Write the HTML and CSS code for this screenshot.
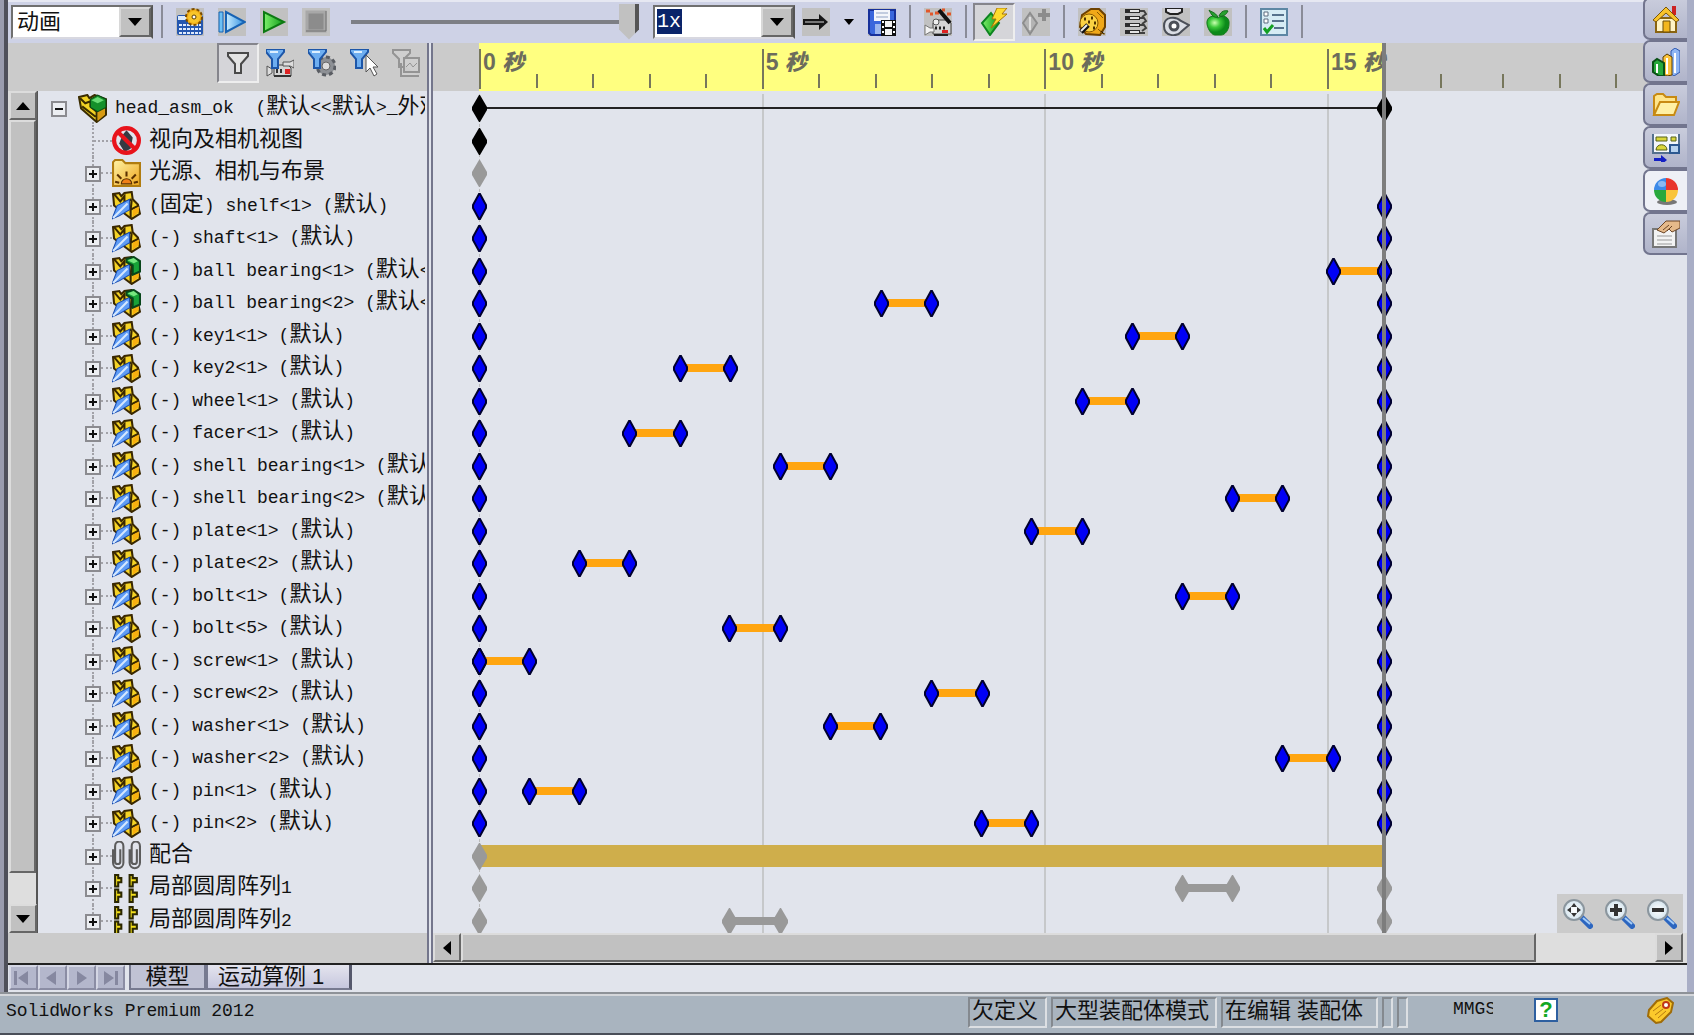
FILE: index.html
```html
<!DOCTYPE html>
<html lang="zh-CN">
<head>
<meta charset="utf-8">
<title>SolidWorks Premium 2012</title>
<link rel="stylesheet" href="styles.css">
</head>
<body>
<svg class="sprite" aria-hidden="true">
  <defs>
    <linearGradient id="gBlue" x1="0" x2="1"><stop offset="0" stop-color="#c8ecff"/><stop offset="1" stop-color="#2f8fe0"/></linearGradient>
    <linearGradient id="gGreen" x1="0" x2="1"><stop offset="0" stop-color="#7cf06a"/><stop offset="1" stop-color="#0f9a18"/></linearGradient>
    <linearGradient id="gGold" x1="0" x2="1" y2="1"><stop offset="0" stop-color="#fff4a8"/><stop offset="1" stop-color="#eea51c"/></linearGradient>
    <radialGradient id="gApple" cx=".35" cy=".35"><stop offset="0" stop-color="#c9ffb0"/><stop offset=".5" stop-color="#3cc83a"/><stop offset="1" stop-color="#0b8a1a"/></radialGradient>
    <radialGradient id="gLens"><stop offset="0" stop-color="#fff"/><stop offset="1" stop-color="#d4e4ee"/></radialGradient>
  </defs>
  <symbol id="calc" viewBox="0 0 28 28"><rect x="1" y="7" width="26" height="20" rx="2" fill="#2456b0"/><rect x="2" y="8" width="12" height="4" fill="#dbe9fa"/><path d="M3 17h22M3 21h22M3 25h22" stroke="#dfeafc" stroke-width="2" stroke-dasharray="3 1"/><circle cx="18" cy="9" r="8" fill="#f2ad14" stroke="#7a4c00" stroke-width="2" stroke-dasharray="3 2"/><circle cx="18" cy="9" r="6" fill="#f8c42a"/><circle cx="18" cy="9" r="2" fill="#fff" stroke="#5a3c00"/></symbol>
  <symbol id="playstart" viewBox="0 0 28 28"><path d="M1 4h4v20H1z" fill="#6cc0f4" stroke="#1763b4"/><path d="M8 4v20l19-10z" fill="url(#gBlue)" stroke="#1763b4" stroke-width="2"/></symbol>
  <symbol id="play" viewBox="0 0 28 28"><path d="M4 4v20l20-10z" fill="url(#gGreen)" stroke="#0c7a12" stroke-width="2"/></symbol>
  <symbol id="stop" viewBox="0 0 28 28"><path d="M5 4h18v19H5z" fill="#8c8c8c" stroke="#a8a8a8" stroke-width="3"/><path d="M4 23h20V3" fill="none" stroke="#707070"/></symbol>
  <symbol id="arrow" viewBox="0 0 28 28"><path d="M1 11h16V6l9 8-9 8v-5H1z" fill="#161616"/><path d="M3 14h19" stroke="#777" stroke-width="2"/></symbol>
  <symbol id="save" viewBox="0 0 28 28"><path d="M1 2h26v25H3l-2-2z" fill="#3a67dc" stroke="#17309a" stroke-width="2"/><path d="M6 2h16v11H6z" fill="#f3f6fb"/><path d="M8 5h12M8 9h12" stroke="#8fa2c4"/><path d="M7 16h9v10H7z" fill="#9db7ee"/><path d="M13 12h15v16H13z" fill="#111"/><path d="M17 13h7v6h-7zM17 21h7v6h-7z" fill="#f4f4f4"/><path d="M15 13v15M26 13v15" stroke="#fff" stroke-width="2" stroke-dasharray="2 3"/></symbol>
  <symbol id="wizard" viewBox="0 0 28 28"><path d="M2 3h4M11 5h4M18 2h3M23 6h4M6 6h3" stroke="#e2572a" stroke-width="3"/><path d="M9 15l3-3h11l4 3v11H9z" fill="#d6d6d6" stroke="#444"/><path d="M1 17l5 3h4v4H6l-5 3z" fill="#f3f3f3" stroke="#777"/><path d="M15 2l11 13" stroke="#111" stroke-width="4"/><circle cx="12" cy="14" r="3" fill="#eee" stroke="#555"/><path d="M11 20h12" stroke="#222" stroke-width="3" stroke-dasharray="2 2"/><path d="M18 22h6v3h-6z" fill="#d22"/><path d="M10 27h14" stroke="#222" stroke-width="2"/></symbol>
  <symbol id="autokey" viewBox="0 0 28 28"><path d="M11 5l8 10-9 12L2 15z" fill="url(#gGreen)" stroke="#0d8420" stroke-width="2"/><path d="M17 0h10l-5 6h5L11 20l5-9h-4z" fill="#ffdc2e" stroke="#a87608"/></symbol>
  <symbol id="addkey" viewBox="0 0 28 28"><path d="M8 5l7 10-7 11-7-11z" fill="#b4b4b4" stroke="#8d8d8d" stroke-width="2"/><path d="M8 9v13" stroke="#ddd" stroke-width="2"/><path d="M22 1v12M16 7h12" stroke="#8b8b8b" stroke-width="4"/></symbol>
  <symbol id="motor" viewBox="0 0 28 28"><path d="M4 7l9-6h8l6 6v12l-5 8-14-1-6-7z" fill="#f0a818" stroke="#6e4200" stroke-width="2"/><circle cx="11" cy="15" r="9" fill="#fbd243" stroke="#8a5a00"/><path d="M19 4l6 6M20 21l5 5h2" stroke="#8a5a00"/><path d="M6 11h2M13 10h2M16 15h2M10 14h2M15 20h2" stroke="#503400" stroke-width="3"/><path d="M3 24l7-7" stroke="#111" stroke-width="5"/><path d="M3 23l6-6" stroke="#eee" stroke-width="2"/></symbol>
  <symbol id="spring" viewBox="0 0 28 28"><path d="M5 3h15M5 10h15M5 17h15M5 24h15" stroke="#2c2c2c" stroke-width="4"/><path d="M10 3h9M10 10h9M10 17h9M10 24h9" stroke="#e4e4e4" stroke-width="2"/><path d="M20 3h4l2 3-4 3M20 10h4l2 3-4 3M20 17h4l2 3-4 3M20 25h5" fill="none" stroke="#404040" stroke-width="2"/></symbol>
  <symbol id="contact" viewBox="0 0 28 28"><path d="M4 0v4l4 2h8l4-2V0z" fill="#e8e8ee" stroke="#222" stroke-width="2"/><path d="M2 18c0-10 12-10 17-5l8 4-7 6C14 30 2 28 2 18z" fill="#dadde4" stroke="#4b4f58" stroke-width="2"/><circle cx="12" cy="18" r="4" fill="#fff" stroke="#4b4f58" stroke-width="3"/></symbol>
  <symbol id="gravity" viewBox="0 0 28 28"><path d="M14 10c-5-4-12-1-11 6 1 6 5 11 8 11h6c4 0 8-5 8-11 1-7-6-10-11-6z" fill="url(#gApple)" stroke="#127a1c"/><path d="M14 9c-3-5-7-5-9-7 3 6 5 8 9 7zM15 8c2-5 6-6 9-5-2 4-5 6-9 5z" fill="#28a030" stroke="#126a1a"/></symbol>
  <symbol id="options" viewBox="0 0 28 28"><path d="M1 1h26v26H1z" fill="#d6ecf4" stroke="#5d87a4" stroke-width="2"/><path d="M4 4h4v4H4zM4 11h4v4H4z" fill="#fff" stroke="#5a6c80"/><path d="M12 7h12M12 13h12M14 20h10" stroke="#56728c" stroke-width="2"/><path d="M4 20l3 4 6-7" fill="none" stroke="#12a022" stroke-width="3"/></symbol>
  <symbol id="funnel" viewBox="0 0 28 28"><path d="M4 4h20v3l-7 8v9h-6v-9L4 7z" fill="#e4e4e4" stroke="#4a4a4a" stroke-width="2"/></symbol>
  <symbol id="bluefunnel" viewBox="0 0 28 28"><path d="M0 0h18v3l-6 7v9H6v-9L0 3z" fill="#6eaef0" stroke="#1d56a8" stroke-width="2"/><path d="M4 3h8" stroke="#dcefff" stroke-width="2"/></symbol>
  <symbol id="fmotion" viewBox="0 0 28 28"><path d="M8 16h14l3 3v8H8z" fill="#d5d5d5" stroke="#444"/><path d="M1 17l5 3v4l-5 3zM28 11v8l-4-2h-7v-4h7z" fill="#ddd" stroke="#555"/><path d="M10 22h8" stroke="#333" stroke-width="4" stroke-dasharray="2 2"/><path d="M19 20h5v5h-5z" fill="#d22"/><path d="M8 27h17" stroke="#333" stroke-width="2"/><use href="#bluefunnel"/></symbol>
  <symbol id="fdrive" viewBox="0 0 28 28"><circle cx="18" cy="17" r="9" fill="#8d9095" stroke="#5a5d63" stroke-width="3" stroke-dasharray="4 3"/><circle cx="18" cy="17" r="4" fill="#ddd" stroke="#666"/><use href="#bluefunnel"/></symbol>
  <symbol id="fselect" viewBox="0 0 28 28"><use href="#bluefunnel"/><path d="M16 6v17l4-4 4 8 3-2-4-7h5z" fill="#fff" stroke="#555"/></symbol>
  <symbol id="fresult" viewBox="0 0 28 28"><path d="M1 1h17v3l-6 6v8H7v-8L1 4zM12 9h15v14H12zM9 14v13h18" fill="#cfcfcf" stroke="#949494" stroke-width="2"/><path d="M14 18l4-4 3 4 4-4" fill="none" stroke="#949494"/></symbol>
  <symbol id="asm" viewBox="0 0 28 28"><path d="M1 3l8-2 2 3 5-3 11 4v15L18 27 3 14z" fill="#f2d324" stroke="#3a2c00" stroke-width="2"/><path d="M2 4l5 5 5-2v5l6 5v9M4 12l13 10" fill="none" stroke="#3a2c00" stroke-width="2"/><path d="M19 17l7-3v6l-7 6z" fill="#d89b12"/><path d="M12 5l7-4 8 4v8l-8 4-7-4z" fill="#15902a" stroke="#0a4a14"/><path d="M13 6l6-3 6 3-6 3z" fill="#69dc74"/></symbol>
  <symbol id="noview" viewBox="0 0 28 28"><path d="M14 4l6 7-2 11-6 3-5-8 3-8z" fill="#343a42"/><circle cx="14" cy="14" r="12" fill="none" stroke="#e8131b" stroke-width="4"/><path d="M6 6l16 16" stroke="#e8131b" stroke-width="4"/></symbol>
  <symbol id="lights" viewBox="0 0 28 28"><path d="M1 26V3l2-2h7l3 3h14v22z" fill="url(#gGold)" stroke="#b07c10" stroke-width="2"/><path d="M9 24a5 5 0 0 1 10 0z" fill="#f08018" stroke="#5a3000"/><path d="M14 17v-5M9 19l-4-4M19 19l4-4M7 23l-4-1M21 23l4-1" stroke="#5a3000" stroke-width="2"/></symbol>
  <symbol id="part" viewBox="0 0 28 28"><path d="M1 3l6-1 2 3 3-3 7-1 1 7 5 5 2 9-8 5-8-6-9-7z" fill="#f5d326" stroke="#3a2800" stroke-width="2"/><path d="M2 3l6 7 4-5v6l7-3M19 9l-1 9 8-4M18 18v8" fill="none" stroke="#3a2800" stroke-width="2"/><path d="M20 18l6-3v5l-6 5z" fill="#f8b010"/><path d="M0 27l5-13L17 8v10L7 24z" fill="#5f9cf6" stroke="#174bb0"/><path d="M1 26L15 12" stroke="#d5e8ff" stroke-width="2"/></symbol>
  <symbol id="subasm" viewBox="0 0 28 28"><use href="#part"/><path d="M14 3l7-2 6 4v10l-7 3V9l-6-3z" fill="#18a238" stroke="#08451a" stroke-width="2"/><path d="M15 4l6-2 4 3-4 2z" fill="#77e57f"/></symbol>
  <symbol id="mates" viewBox="0 0 28 28"><path d="M1 8v13c0 7 10 7 10 0V5c0-6-8-6-8 0v15c0 3 5 3 5 0V8M17 8v13c0 7 10 7 10 0V5c0-6-8-6-8 0v15c0 3 5 3 5 0V8" fill="none" stroke="#5c5c5c" stroke-width="2"/></symbol>
  <symbol id="pattern" viewBox="0 0 28 28"><path d="M3 1h3v3h3v4H6v4H3zM17 1h3v3h4v4h-4v4h-3zM3 15h3v3h3v4H6v5H3zM17 15h3v3h4v4h-4v5h-3z" fill="#f4e11c" stroke="#2b2700" stroke-width="2"/></symbol>
  <symbol id="home" viewBox="0 0 28 28"><path d="M20 1h4v9h-4z" fill="#c22"/><path d="M4 13h20v14H4z" fill="#fff3c4" stroke="#8a6410" stroke-width="2"/><path d="M1 15L14 2l13 13-3 2L14 8 4 17z" fill="#f8c32c" stroke="#7a5608"/><path d="M11 16h7v11h-7z" fill="#f3b61c" stroke="#6b4c08"/></symbol>
  <symbol id="books" viewBox="0 0 28 28"><path d="M19 3l4-3 5 3v21l-6 4-3-2z" fill="#8fb6f4" stroke="#2c56b0"/><path d="M11 9l4-3 5 3v18l-5 1-4-2z" fill="#fbc33c" stroke="#5b3d00"/><path d="M1 14l4-3 7 4v13H7l-6-4z" fill="#27a93b" stroke="#0a5016" stroke-width="2"/><path d="M5 16v9M15 10v16M23 5v20" stroke="#fff" stroke-width="2"/></symbol>
  <symbol id="folder" viewBox="0 0 28 28"><path d="M2 24V5l3-2h6l3 3h10v5" fill="#ffe58a" stroke="#c88a12" stroke-width="2"/><path d="M2 24l6-13h19l-5 13z" fill="#fff0a4" stroke="#c88a12" stroke-width="2"/></symbol>
  <symbol id="palette" viewBox="0 0 28 28"><path d="M1 -1h26v20H1z" fill="#f3f7fb" stroke="#54708e" stroke-width="2"/><path d="M4 3h11v4H4zM19 3h5v4h-5zM4 16c0-7 11-7 11 0z" fill="#d9d63a" stroke="#55601a"/><path d="M18 11h9v8h-9z" fill="#b7d2ee" stroke="#2c5890" stroke-width="2"/><path d="M2 24h7v-3l6 5-6 5v-4H2z" fill="#1420c4"/></symbol>
  <symbol id="ball" viewBox="0 0 28 28"><ellipse cx="15" cy="25" rx="10" ry="3" fill="#777"/><path d="M14 13V1A12 12 0 0 0 2 13z" fill="#3c8ae8"/><path d="M14 13h12A12 12 0 0 0 14 1z" fill="#e8352c"/><path d="M14 13v12a12 12 0 0 0 12-12z" fill="#f9c43a"/><path d="M14 13H2a12 12 0 0 0 12 12z" fill="#28a83c"/><ellipse cx="10" cy="7" rx="4" ry="3" fill="#fff" opacity=".4"/></symbol>
  <symbol id="props" viewBox="0 0 28 28"><path d="M1 9h23v18H1z" fill="#f3f3f3" stroke="#777" stroke-width="2"/><path d="M5 16h15M5 20h15M5 24h15" stroke="#999"/><path d="M5 10l9-9h14v7l-8 4-3-3-5 4z" fill="#e5b98a" stroke="#6b4526"/><path d="M11 10l6-5M15 11l5-5" stroke="#6b4526"/></symbol>
  <symbol id="lens" viewBox="0 0 30 30"><path d="M19 19l8 8" stroke="#2c66c0" stroke-width="6" stroke-linecap="round"/><path d="M20 19l7 6" stroke="#a5cdf8" stroke-width="2"/><circle cx="11" cy="11" r="10" fill="url(#gLens)" stroke="#8b969e" stroke-width="2"/></symbol>
  <symbol id="zfit" viewBox="0 0 30 30"><use href="#lens"/><path d="M11 4l3 4H8zM11 18l3-4H8zM4 11l4-3v6zM18 11l-4-3v6z" fill="#333"/></symbol>
  <symbol id="zin" viewBox="0 0 30 30"><use href="#lens"/><path d="M11 5v12M5 11h12" stroke="#333" stroke-width="4"/></symbol>
  <symbol id="zout" viewBox="0 0 30 30"><use href="#lens"/><path d="M5 11h12" stroke="#333" stroke-width="4"/></symbol>
  <symbol id="tag" viewBox="0 0 28 28"><path d="M11 4l10-3 6 5-2 9-10 10-5 1-8-7 1-6z" fill="#fbc92c" stroke="#a06c08" stroke-width="2"/><circle cx="20" cy="8" r="3" fill="#fff" stroke="#c03818" stroke-width="2"/><path d="M7 14l8-6M9 18l8-6M12 21l8-7" stroke="#b47a10"/></symbol>
</svg>

<div class="frame">
  <header class="toolbar">
    <div class="combo"><select aria-label="算例类型"><option>动画</option></select></div>
    <span class="sep first"></span>
    <button class="tool" aria-label="计算"><svg><use href="#calc"/></svg></button>
    <button class="tool" aria-label="从头播放"><svg><use href="#playstart"/></svg></button>
    <button class="tool" aria-label="播放"><svg><use href="#play"/></svg></button>
    <button class="tool" aria-label="停止"><svg><use href="#stop"/></svg></button>
    <input class="slider" type="range" min="0" max="100" value="100" aria-label="时间">
    <div class="combo speed"><select aria-label="播放速度"><option>1x</option></select></div>
    <button class="tool" aria-label="播放模式"><svg><use href="#arrow"/></svg></button>
    <button class="more" aria-label="更多模式"></button>
    <button class="tool" aria-label="保存动画"><svg><use href="#save"/></svg></button>
    <span class="sep"></span>
    <button class="tool" aria-label="动画向导"><svg><use href="#wizard"/></svg></button>
    <span class="sep"></span>
    <button class="tool pressed" aria-label="自动键码"><svg><use href="#autokey"/></svg></button>
    <button class="tool" aria-label="添加键码"><svg><use href="#addkey"/></svg></button>
    <span class="sep"></span>
    <button class="tool" aria-label="马达"><svg><use href="#motor"/></svg></button>
    <button class="tool" aria-label="弹簧"><svg><use href="#spring"/></svg></button>
    <button class="tool" aria-label="接触"><svg><use href="#contact"/></svg></button>
    <button class="tool" aria-label="引力"><svg><use href="#gravity"/></svg></button>
    <span class="sep"></span>
    <button class="tool" aria-label="选项"><svg><use href="#options"/></svg></button>
    <span class="sep"></span>
  </header>

  <main class="study">
    <section class="browser">
      <div class="filters">
        <button class="tool pressed" aria-label="无过滤"><svg><use href="#funnel"/></svg></button>
        <button class="tool" aria-label="过滤动画"><svg><use href="#fmotion"/></svg></button>
        <button class="tool" aria-label="过滤驱动"><svg><use href="#fdrive"/></svg></button>
        <button class="tool" aria-label="过滤选定"><svg><use href="#fselect"/></svg></button>
        <button class="tool" aria-label="过滤结果"><svg><use href="#fresult"/></svg></button>
      </div>
      <div class="treebox">
        <div class="vscroll"><button class="up" aria-label="向上"></button><div class="thumb"></div><button class="down" aria-label="向下"></button></div>
        <div class="clip">
        <ul class="tree">
          <li class="root"><button class="box minus" aria-label="折叠"></button><svg><use href="#asm"/></svg><span>head_asm_ok&nbsp; (<b>默认</b>&lt;&lt;<b>默认</b>&gt;_<b>外观</b></span></li>
          <li class="leaf"><svg><use href="#noview"/></svg><span><b>视向及相机视图</b></span></li>
          <li><button class="box" aria-label="展开"></button><svg><use href="#lights"/></svg><span><b>光源、相机与布景</b></span></li>
          <li><button class="box" aria-label="展开"></button><svg><use href="#part"/></svg><span>(<b>固定</b>) shelf&lt;1&gt; (<b>默认</b>)</span></li>
          <li><button class="box" aria-label="展开"></button><svg><use href="#part"/></svg><span>(-) shaft&lt;1&gt; (<b>默认</b>)</span></li>
          <li><button class="box" aria-label="展开"></button><svg><use href="#subasm"/></svg><span>(-) ball bearing&lt;1&gt; (<b>默认</b>&lt;</span></li>
          <li><button class="box" aria-label="展开"></button><svg><use href="#subasm"/></svg><span>(-) ball bearing&lt;2&gt; (<b>默认</b>&lt;</span></li>
          <li><button class="box" aria-label="展开"></button><svg><use href="#part"/></svg><span>(-) key1&lt;1&gt; (<b>默认</b>)</span></li>
          <li><button class="box" aria-label="展开"></button><svg><use href="#part"/></svg><span>(-) key2&lt;1&gt; (<b>默认</b>)</span></li>
          <li><button class="box" aria-label="展开"></button><svg><use href="#part"/></svg><span>(-) wheel&lt;1&gt; (<b>默认</b>)</span></li>
          <li><button class="box" aria-label="展开"></button><svg><use href="#part"/></svg><span>(-) facer&lt;1&gt; (<b>默认</b>)</span></li>
          <li><button class="box" aria-label="展开"></button><svg><use href="#part"/></svg><span>(-) shell bearing&lt;1&gt; (<b>默认</b>)</span></li>
          <li><button class="box" aria-label="展开"></button><svg><use href="#part"/></svg><span>(-) shell bearing&lt;2&gt; (<b>默认</b>)</span></li>
          <li><button class="box" aria-label="展开"></button><svg><use href="#part"/></svg><span>(-) plate&lt;1&gt; (<b>默认</b>)</span></li>
          <li><button class="box" aria-label="展开"></button><svg><use href="#part"/></svg><span>(-) plate&lt;2&gt; (<b>默认</b>)</span></li>
          <li><button class="box" aria-label="展开"></button><svg><use href="#part"/></svg><span>(-) bolt&lt;1&gt; (<b>默认</b>)</span></li>
          <li><button class="box" aria-label="展开"></button><svg><use href="#part"/></svg><span>(-) bolt&lt;5&gt; (<b>默认</b>)</span></li>
          <li><button class="box" aria-label="展开"></button><svg><use href="#part"/></svg><span>(-) screw&lt;1&gt; (<b>默认</b>)</span></li>
          <li><button class="box" aria-label="展开"></button><svg><use href="#part"/></svg><span>(-) screw&lt;2&gt; (<b>默认</b>)</span></li>
          <li><button class="box" aria-label="展开"></button><svg><use href="#part"/></svg><span>(-) washer&lt;1&gt; (<b>默认</b>)</span></li>
          <li><button class="box" aria-label="展开"></button><svg><use href="#part"/></svg><span>(-) washer&lt;2&gt; (<b>默认</b>)</span></li>
          <li><button class="box" aria-label="展开"></button><svg><use href="#part"/></svg><span>(-) pin&lt;1&gt; (<b>默认</b>)</span></li>
          <li><button class="box" aria-label="展开"></button><svg><use href="#part"/></svg><span>(-) pin&lt;2&gt; (<b>默认</b>)</span></li>
          <li><button class="box" aria-label="展开"></button><svg><use href="#mates"/></svg><span><b>配合</b></span></li>
          <li><button class="box" aria-label="展开"></button><svg><use href="#pattern"/></svg><span><b>局部圆周阵列</b>1</span></li>
          <li><button class="box" aria-label="展开"></button><svg><use href="#pattern"/></svg><span><b>局部圆周阵列</b>2</span></li>
        </ul>
        </div>
      </div>
      <div class="filler"></div>
    </section>

    <section class="timeline">
      <div class="chart">
        <div class="ruler"><div class="scale">
          <span class="major" style="--t:0">0 <b>秒</b></span><i style="--t:1"></i><i style="--t:2"></i><i style="--t:3"></i><i style="--t:4"></i>
          <span class="major" style="--t:5">5 <b>秒</b></span><i style="--t:6"></i><i style="--t:7"></i><i style="--t:8"></i><i style="--t:9"></i>
          <span class="major" style="--t:10">10 <b>秒</b></span><i style="--t:11"></i><i style="--t:12"></i><i style="--t:13"></i><i style="--t:14"></i>
          <span class="major" style="--t:15">15 <b>秒</b></span><i style="--t:17"></i><i style="--t:18.1"></i><i style="--t:19.1"></i><i style="--t:20.1"></i>
        </div></div>
        <div class="lanes"><div class="grid">
          <div class="lane black total"></div>
          <div class="lane black start"></div>
          <div class="lane gray start"></div>
          <div class="lane"></div>
          <div class="lane"></div>
          <div class="lane"><span class="move" style="--t:15.11"></span></div>
          <div class="lane"><span class="move" style="--t:7.11"></span></div>
          <div class="lane"><span class="move" style="--t:11.55"></span></div>
          <div class="lane"><span class="move" style="--t:3.55"></span></div>
          <div class="lane"><span class="move" style="--t:10.66"></span></div>
          <div class="lane"><span class="move" style="--t:2.66"></span></div>
          <div class="lane"><span class="move" style="--t:5.32"></span></div>
          <div class="lane"><span class="move" style="--t:13.32"></span></div>
          <div class="lane"><span class="move" style="--t:9.77"></span></div>
          <div class="lane"><span class="move" style="--t:1.77"></span></div>
          <div class="lane"><span class="move" style="--t:12.43"></span></div>
          <div class="lane"><span class="move" style="--t:4.43"></span></div>
          <div class="lane"><span class="move" style="--t:0"></span></div>
          <div class="lane"><span class="move" style="--t:8"></span></div>
          <div class="lane"><span class="move" style="--t:6.21"></span></div>
          <div class="lane"><span class="move" style="--t:14.21"></span></div>
          <div class="lane"><span class="move" style="--t:0.88"></span></div>
          <div class="lane"><span class="move" style="--t:8.88"></span></div>
          <div class="lane gray mate start"></div>
          <div class="lane gray"><span class="move" style="--t:12.43"></span></div>
          <div class="lane gray"><span class="move" style="--t:4.43"></span></div>
          <hr style="--t:0" class="zero"><hr style="--t:5"><hr style="--t:10"><hr style="--t:15">
        </div></div>
        <div class="playarea"><div class="playhead"></div></div>
        <div class="zooms">
          <button class="tool" aria-label="整屏显示"><svg><use href="#zfit"/></svg></button>
          <button class="tool" aria-label="放大"><svg><use href="#zin"/></svg></button>
          <button class="tool" aria-label="缩小"><svg><use href="#zout"/></svg></button>
        </div>
      </div>
      <div class="hscroll"><button class="left" aria-label="向左"></button><div class="thumb"></div><button class="right" aria-label="向右"></button></div>
    </section>
  </main>

  <nav class="sheets">
    <button class="nav" aria-label="第一个"><svg viewBox="0 0 24 20"><path d="M3 3h3v14H3zM17 3v14L7 10z"/></svg></button>
    <button class="nav" aria-label="上一个"><svg viewBox="0 0 24 20"><path d="M16 3v14L6 10z"/></svg></button>
    <button class="nav" aria-label="下一个"><svg viewBox="0 0 24 20"><path d="M8 3v14l10-7z"/></svg></button>
    <button class="nav" aria-label="最后一个"><svg viewBox="0 0 24 20"><path d="M17 3h3v14h-3zM6 3v14l10-7z"/></svg></button>
    <button class="sheet model">模型</button>
    <button class="sheet active">运动算例 1</button>
  </nav>

  <aside class="taskpane">
    <button aria-label="资源"><svg><use href="#home"/></svg></button>
    <button aria-label="设计库"><svg><use href="#books"/></svg></button>
    <button aria-label="文件探索器"><svg><use href="#folder"/></svg></button>
    <button aria-label="视图调色板"><svg><use href="#palette"/></svg></button>
    <button class="on" aria-label="外观"><svg><use href="#ball"/></svg></button>
    <button aria-label="自定义属性"><svg><use href="#props"/></svg></button>
  </aside>
</div>

<footer class="status">
  <span class="product">SolidWorks Premium 2012</span>
  <span class="cell">欠定义</span>
  <span class="cell mode">大型装配体模式</span>
  <span class="cell edit">在编辑 装配体</span>
  <span class="cell slim"></span>
  <span class="cell slim"></span>
  <span class="units">MMGS</span>
  <button class="help" aria-label="帮助">?</button>
  <button class="tags" aria-label="标签"><svg><use href="#tag"/></svg></button>
</footer>
</body>
</html>
```
FILE: styles.css
```css
:root {
  --canvas: #e1e4ec;
  --face: #c1c1c1;
  --panel: #cbcbcb;
  --mono: "Liberation Mono", "Noto Sans CJK SC", monospace;
  --sans: "Liberation Sans", "Noto Sans CJK SC", sans-serif;
  --second: 4.68%;
}

* { box-sizing: border-box; }

body {
  margin: 0;
  height: 100vh;
  min-height: 640px;
  display: flex;
  flex-direction: column;
  overflow: hidden;
  background: var(--canvas);
  color: #111;
  font: 18px/24px var(--mono);
}

button { padding: 0; margin: 0; border: 0; background: none; font: inherit; color: inherit; }
.sprite { position: absolute; width: 0; height: 0; }

.frame {
  position: relative;
  flex: 1;
  min-height: 0;
  display: flex;
  flex-direction: column;
  border-left: 8px ridge #9a9cae;
  border-right: 7px solid #a9aec6;
}

/* toolbar */
.toolbar {
  height: 43px;
  display: flex;
  align-items: center;
  padding: 0 0 2px 3px;
  background: #ced2e6;
  border-top: 2px solid #e6e8f2;
  flex: none;
}
.combo { position: relative; width: 142px; height: 34px; flex: none; }
.combo select {
  appearance: none;
  width: 100%;
  height: 100%;
  padding: 0 4px;
  border: 2px solid #6f6f6f;
  border-right-color: #555;
  border-bottom-color: #d8d8e0;
  border-radius: 0;
  background: #fff;
  color: #111;
  font: 22px/24px var(--sans);
}
.combo::after {
  content: "";
  position: absolute;
  right: 2px;
  top: 2px;
  bottom: 2px;
  width: 28px;
  border: 2px solid;
  border-color: #d8d8d8 #666 #666 #d8d8d8;
  background: url("data:image/svg+xml,%3Csvg xmlns='http://www.w3.org/2000/svg' width='14' height='8'%3E%3Cpath d='M0 0h14L7 8z'/%3E%3C/svg%3E") center no-repeat var(--face);
  pointer-events: none;
}
.combo.speed select {
  color: #fff;
  font: 20px/24px var(--mono);
  padding: 0 2px;
  background: linear-gradient(#0a246a, #0a246a) 2px 2px / 25px 25px no-repeat #fff;
}
.combo.speed option { color: #111; }
.sep { flex: none; width: 14px; height: 33px; border: solid #0000; border-width: 0 6px; background: #8a8c98 padding-box; }
.sep.first { margin-left: 2px; }
.tool { flex: none; width: 42px; height: 38px; display: grid; place-items: center; }
.tool svg { width: 28px; height: 28px; overflow: visible; background: var(--face); }
.tool.pressed { background: #d5d5d9; border: 2px solid; border-color: #85858c #eee #eee #85858c; }
.tool.pressed svg, .filters .tool svg, .zooms .tool svg { background: none; }
.more { flex: none; width: 24px; height: 30px; background: url("data:image/svg+xml,%3Csvg xmlns='http://www.w3.org/2000/svg' width='10' height='6'%3E%3Cpath d='M0 0h10L5 6z'/%3E%3C/svg%3E") center no-repeat; }
.slider { appearance: none; flex: none; width: 288px; height: 38px; margin: 0 14px; background: linear-gradient(#7d7f85, #7d7f85) center / 100% 4px no-repeat; }
.slider::-webkit-slider-thumb {
  appearance: none;
  width: 20px;
  height: 36px;
  background: linear-gradient(90deg, #c1c1c1 16px, #555 16px);
  clip-path: polygon(0 0, 100% 0, 100% 72%, 50% 100%, 0 72%);
}

/* study */
.study { flex: 1; min-height: 0; display: flex; border-bottom: 2px solid #222; }
.browser { width: 419px; flex: none; display: flex; flex-direction: column; }
.filters { height: 48px; flex: none; display: flex; justify-content: flex-end; align-items: flex-start; background: var(--panel); }
.filters .tool { height: 40px; }
.filler { height: 30px; flex: none; background: var(--panel); }
.treebox { flex: 1; min-height: 0; display: flex; }
.vscroll { width: 30px; flex: none; display: flex; flex-direction: column; background: #dedede; border-left: 1px solid #ddd; border-right: 2px solid #555; }
.vscroll button, .hscroll button { flex: none; width: 28px; height: 29px; }
.vscroll button, .hscroll button, .thumb { border: 2px solid; border-color: #dcdcdc #666 #666 #dcdcdc; background: var(--arrow, none) center no-repeat var(--face); }
.vscroll .thumb { flex: 1; margin-bottom: 31px; }
.up { --arrow: url("data:image/svg+xml,%3Csvg xmlns='http://www.w3.org/2000/svg' width='14' height='8'%3E%3Cpath d='M0 8h14L7 0z'/%3E%3C/svg%3E"); }
.down { --arrow: url("data:image/svg+xml,%3Csvg xmlns='http://www.w3.org/2000/svg' width='14' height='8'%3E%3Cpath d='M0 0h14L7 8z'/%3E%3C/svg%3E"); }
.left { --arrow: url("data:image/svg+xml,%3Csvg xmlns='http://www.w3.org/2000/svg' width='8' height='14'%3E%3Cpath d='M8 0v14L0 7z'/%3E%3C/svg%3E"); }
.right { --arrow: url("data:image/svg+xml,%3Csvg xmlns='http://www.w3.org/2000/svg' width='8' height='14'%3E%3Cpath d='M0 0v14l8-7z'/%3E%3C/svg%3E"); }

/* tree rows and timeline lanes share one row grid */
.clip { flex: 1; min-width: 0; overflow: hidden; margin-right: 2px; }
.tree, .grid { height: calc(100% + 4px); display: grid; grid-template-rows: repeat(26, 1fr); }
.clip, .lanes { padding-top: 1px; }
.tree { margin: 0; padding: 0; list-style: none; }
.tree li { position: relative; display: flex; align-items: center; min-height: 0; padding-left: 47px; white-space: pre; }
.tree li::before { content: ""; position: absolute; left: 54px; top: 0; bottom: 0; border-left: 2px dotted #a2a2a8; }
.tree li.root::before { top: 30px; }
.tree li:last-child::before { bottom: 50%; }
.tree li::after { content: ""; order: 1; width: 11px; border-top: 2px dotted #a2a2a8; }
.tree li.root::after { display: none; }
.tree li.leaf::after { width: 18px; margin-left: 9px; }
.tree svg { order: 2; width: 29px; height: 29px; flex: none; overflow: visible; }
.tree span { order: 3; margin-left: 8px; line-height: 30px; }
.tree b { font: 22px/24px var(--sans); }
.tree li.root { padding-left: 13px; }
.root svg { margin-left: 11px; }
.box { position: relative; flex: none; width: 16px; height: 16px; margin-top: 2px; border: 2px solid #8b8b90; background: linear-gradient(#111, #111) center / 8px 2px no-repeat, linear-gradient(#111, #111) center / 2px 8px no-repeat, #eceef2; }
.box.minus { background: linear-gradient(#111, #111) center / 8px 2px no-repeat #eceef2; }

/* timeline */
.timeline { flex: 1; min-width: 0; display: flex; flex-direction: column; border-left: 6px double #74768c; }
.chart { position: relative; flex: 1; min-height: 0; display: flex; flex-direction: column; }
.ruler { height: 48px; flex: none; padding-left: 46px; background: var(--panel); overflow: hidden; }
.scale { position: relative; height: 100%; }
.scale::before { content: ""; display: block; height: 100%; width: calc(16 * var(--second)); background: #ffff80; }
.scale i { position: absolute; left: calc(var(--t) * var(--second)); bottom: 3px; height: 14px; border-left: 2px solid #77775c; }
.major { position: absolute; left: calc(var(--t) * var(--second)); top: 6px; height: 40px; padding-left: 2px; border-left: 2px solid #77775c; color: #6c6c5c; font: bold 23px/26px var(--sans); white-space: nowrap; }
.major b { font-size: 22px; font-style: italic; }

.lanes { flex: 1; min-height: 0; padding-left: 46px; overflow: hidden; }
.grid { position: relative; }
.grid hr { position: absolute; z-index: 0; left: calc(var(--t) * var(--second)); top: 2px; bottom: 0; margin: 0; border: 0; border-left: 2px solid #c6c8ca; }
.grid .zero { border-left: 1px dashed #bbb; }
.lane {
  --key: url("data:image/svg+xml,%3Csvg xmlns='http://www.w3.org/2000/svg' width='15' height='27'%3E%3Cpath d='M7 1h1l6 11v3L8 26H7L1 15v-3z' fill='%230000f6' stroke='%23000030' stroke-width='2'/%3E%3C/svg%3E");
  --bar: #ffa510;
  position: relative;
  z-index: 1;
  min-height: 0;
}
.lane.black { --key: url("data:image/svg+xml,%3Csvg xmlns='http://www.w3.org/2000/svg' width='15' height='27'%3E%3Cpath d='M7 0h1l7 12v3L8 27H7L0 15v-3z'/%3E%3C/svg%3E"); }
.lane.gray { --key: url("data:image/svg+xml,%3Csvg xmlns='http://www.w3.org/2000/svg' width='15' height='27'%3E%3Cpath d='M7 0h1l7 12v3L8 27H7L0 15v-3z' fill='%23999'/%3E%3C/svg%3E"); --bar: #999; }
.lane::before, .lane::after, .move::before, .move::after {
  content: "";
  position: absolute;
  top: 50%;
  width: 15px;
  height: 27px;
  margin: -13px 0 0 -7px;
  background: var(--key);
}
.lane::before, .move::before { left: 0; }
.lane::after { left: calc(16 * var(--second)); }
.lane.start::after { display: none; }
.move::after { left: 100%; }
.move { position: absolute; left: calc(var(--t) * var(--second)); width: calc(0.89 * var(--second)); top: 50%; height: 8px; margin-top: -4px; background: var(--bar); }
.total { background: linear-gradient(90deg, #222 calc(16 * var(--second)), #0000 0) center / 100% 2px no-repeat; }
.mate { background: linear-gradient(90deg, #cfae4b calc(16 * var(--second)), #0000 0) center / 100% 22px no-repeat; }
.playarea { position: absolute; z-index: 2; left: 46px; right: 0; top: 0; bottom: 0; pointer-events: none; }
.playhead { position: absolute; left: calc(16 * var(--second)); top: 0; bottom: 0; width: 4px; margin-left: -2px; background: #7d7d7d; }
.zooms { position: absolute; z-index: 3; right: 4px; bottom: 0; display: flex; background: var(--panel); }
.zooms .tool { height: 39px; }
.zooms .tool svg { width: 30px; height: 30px; }
.hscroll { flex: none; height: 30px; display: flex; padding-right: 4px; background: #dedede; }
.hscroll .thumb { width: 86%; margin-right: auto; height: 29px; }

/* sheet tabs */
.sheets { flex: none; height: 27px; display: flex; padding-left: 1px; }
.nav { width: 29px; height: 25px; border: 2px solid; border-color: #d4d6e4 #8b8da4 #8b8da4 #d4d6e4; background: #b4b7cc; }
.nav svg { display: block; width: 24px; height: 20px; fill: #8688a0; }
.sheet { height: 25px; font: 22px/24px var(--sans); border: 2px solid #777a90; border-top: 0; text-align: center; }
.model { width: 77px; margin-left: 4px; background: #c0c2d4; }
.active { width: 146px; background: linear-gradient(#e4e4ee, #c6c7de); text-align: left; padding-left: 10px; border-right: 3px solid #55586c; }

/* task pane tabs lie over the right end of toolbar and ruler */
.taskpane { position: absolute; z-index: 5; right: 0; top: -3px; display: flex; flex-direction: column; }
.taskpane button { width: 44px; height: 43px; display: grid; place-items: center; border: 2px solid #72758e; border-right: 0; border-radius: 7px 0 0 7px; background: linear-gradient(#c9ccdc, #b0b4ca); }
.taskpane .on { background: #eef0f6; }
.taskpane svg { width: 28px; height: 28px; overflow: visible; }

/* status bar */
.status { flex: none; height: 43px; display: flex; align-items: flex-start; padding: 3px 20px 0 6px; background: #a9b4bf; border-top: 2px solid #8e9298; border-bottom: 2px solid #4a4e58; box-shadow: inset 0 2px #d4d6da; }
.product { margin-right: auto; line-height: 28px; }
.cell { flex: none; width: 79px; height: 31px; margin-right: 4px; padding-left: 2px; border: 2px solid; border-color: #84898f #dcdfe3 #dcdfe3 #84898f; font: 22px/24px var(--sans); white-space: nowrap; }
.mode { width: 166px; }
.edit { width: 157px; }
.slim { width: 11px; padding: 0; }
.units { width: 40px; margin: 0 41px; overflow: hidden; line-height: 24px; }
.help { width: 24px; height: 24px; margin-top: 1px; border: 2px solid #2d5fa0; background: #fff; color: #12a822; font: bold 22px/20px var(--sans); }
.tags { width: 28px; height: 28px; margin-left: 88px; }
.tags svg { width: 28px; height: 28px; }
```
